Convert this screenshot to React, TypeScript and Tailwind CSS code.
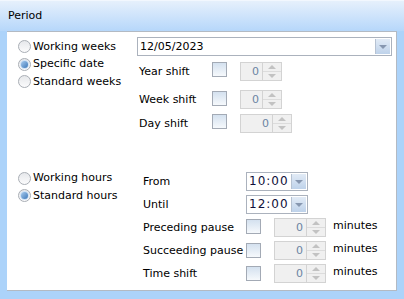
import React from "react";

const Radio = ({ checked, label }: { checked?: boolean; label: string }) => (
  <div className="flex items-center h-[17.5px]">
    <div className="w-[13px] h-[13px] rounded-full border border-[#a9aeb5] bg-gradient-to-b from-[#e6e8eb] to-[#fbfbfc] flex items-center justify-center shrink-0">
      {checked && (
        <div className="w-[9px] h-[9px] rounded-full bg-[#cfe2f5] flex items-center justify-center">
          <div className="w-[7px] h-[7px] rounded-full bg-gradient-to-br from-[#a7cbee] to-[#3d78b8]" />
        </div>
      )}
    </div>
    <span className="ml-[2px] text-black">{label}</span>
  </div>
);

const Check = ({ mt = 0 }: { mt?: number }) => (
  <div
    className="w-[15px] h-[15px] border border-[#a3aab5] bg-gradient-to-b from-[#d4e1ef] to-[#f6f9fc] shrink-0"
    style={{ marginTop: mt }}
  />
);

const Up = () => (
  <div className="w-0 h-0 border-l-[4px] border-r-[4px] border-b-[4px] border-l-transparent border-r-transparent border-b-[#c2c2c2]" />
);
const Down = () => (
  <div className="w-0 h-0 border-l-[4px] border-r-[4px] border-t-[4px] border-l-transparent border-r-transparent border-t-[#c2c2c2]" />
);

const Spin = ({ width }: { width: number }) => (
  <div
    className="flex h-[19px] border border-[#d3d3d3] bg-[#f0f0f0] shrink-0"
    style={{ width }}
  >
    <div className="flex-1 text-right pr-[3px] leading-[17px] text-[#6b84a3]">0</div>
    <div className="w-[19px] border-l border-[#d3d3d3] flex flex-col">
      <div className="flex-1 flex items-center justify-center border-b border-[#dcdcdc]">
        <Up />
      </div>
      <div className="flex-1 flex items-center justify-center">
        <Down />
      </div>
    </div>
  </div>
);

const Combo = ({
  width,
  value,
  time,
}: {
  width: number;
  value: string;
  time?: boolean;
}) => (
  <div
    className="flex h-[19px] border border-[#abb2bd] bg-white shrink-0"
    style={{ width }}
  >
    <div
      className={
        time
          ? "flex-1 pl-[2px] leading-[17px] text-[12px] text-[#10103a] tracking-[1px]"
          : "flex-1 pl-[2px] leading-[17px] text-black"
      }
    >
      {value}
    </div>
    <div className="w-[16px] p-[1px] pl-0">
      <div className="w-full h-full border-l border-[#b6c2d2] bg-gradient-to-b from-[#e2ebf6] to-[#bed2ea] flex items-center justify-center">
        <div className="w-0 h-0 border-l-[4px] border-r-[4px] border-t-[4px] border-l-transparent border-r-transparent border-t-[#8797b0]" />
      </div>
    </div>
  </div>
);

export default function App() {
  return (
    <div
      className="w-[404px] h-[299px] bg-[#acd3fa] flex flex-col text-[11px] text-black"
      style={{ fontFamily: '"DejaVu Sans", Verdana, sans-serif' }}
    >
      <div className="h-[31px] shrink-0 bg-gradient-to-b from-[#e6f0fc] to-[#b6d7fa] border-t border-[#f2f7fe] flex items-center pl-[8px]">
        Period
      </div>
      <div className="flex-1 mx-[7px] mb-[8px] bg-white border-t border-r border-b border-[#b3bac3] flex flex-col">
        {/* Top section */}
        <div className="flex pt-[5px]">
          <div className="w-[130px] pl-[11px] pt-[1px] shrink-0">
            <Radio label="Working weeks" />
            <Radio label="Specific date" checked />
            <Radio label="Standard weeks" />
          </div>
          <div className="flex flex-col">
            <Combo width={255} value="12/05/2023" />
            <div className="flex items-start mt-[6px]">
              <div className="w-[75px] pl-[2px] leading-[19px]">Year shift</div>
              <Check />
              <div className="w-[13px]" />
              <Spin width={42} />
            </div>
            <div className="flex items-start mt-[9px]">
              <div className="w-[75px] pl-[2px] leading-[19px]">Week shift</div>
              <Check mt={1} />
              <div className="w-[13px]" />
              <Spin width={42} />
            </div>
            <div className="flex items-start mt-[4.5px]">
              <div className="w-[75px] pl-[2px] leading-[19px]">Day shift</div>
              <Check mt={0.5} />
              <div className="w-[13px]" />
              <Spin width={52} />
            </div>
          </div>
        </div>
        {/* Bottom section */}
        <div className="flex mt-[37px]">
          <div className="w-[136px] pl-[11px] shrink-0">
            <Radio label="Working hours" />
            <Radio label="Standard hours" checked />
          </div>
          <div className="flex flex-col pt-[2.5px]">
            <div className="flex items-start">
              <div className="w-[103px] leading-[19px]">From</div>
              <Combo width={62} value="10:00" time />
            </div>
            <div className="flex items-start mt-[4px]">
              <div className="w-[103px] leading-[19px]">Until</div>
              <Combo width={62} value="12:00" time />
            </div>
            <div className="flex items-start mt-[4px]">
              <div className="w-[103px] leading-[19px] whitespace-nowrap">Preceding pause</div>
              <Check mt={1} />
              <div className="w-[13px]" />
              <Spin width={52} />
              <div className="ml-[7px] leading-[15px]">minutes</div>
            </div>
            <div className="flex items-start mt-[4px]">
              <div className="w-[103px] leading-[19px] whitespace-nowrap">Succeeding pause</div>
              <Check mt={1.5} />
              <div className="w-[13px]" />
              <Spin width={52} />
              <div className="ml-[7px] leading-[15px]">minutes</div>
            </div>
            <div className="flex items-start mt-[4px]">
              <div className="w-[103px] leading-[19px]">Time shift</div>
              <Check mt={2} />
              <div className="w-[13px]" />
              <Spin width={52} />
              <div className="ml-[7px] leading-[15px]">minutes</div>
            </div>
          </div>
        </div>
      </div>
    </div>
  );
}
